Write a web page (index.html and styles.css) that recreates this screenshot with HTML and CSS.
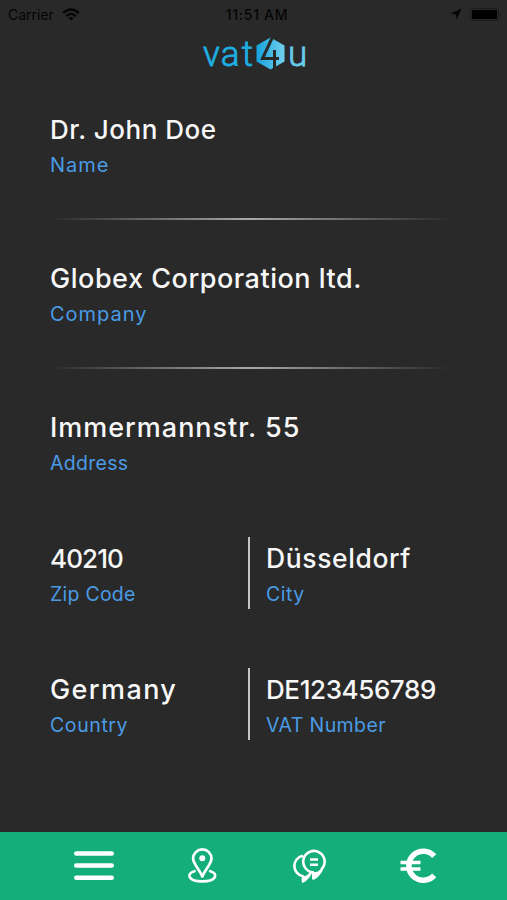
FILE: index.html
```html
<!DOCTYPE html>
<html lang="en">
<head>
<meta charset="utf-8">
<title>vat4u</title>
<link rel="stylesheet" href="styles.css">
</head>
<body>
<div class="app">
  <header class="status">
    <div class="status-left"><span>Carrier</span>
      <svg width="18" height="13" viewBox="0 0 18 13" fill="none" stroke="#050505" stroke-width="2.3"><path d="M1.2 5.2Q9-2.2 16.8 5.2M4.1 8.1Q9 3.6 13.9 8.1"/><path d="M6.5 10Q9 7.8 11.5 10L9 12.5Z" fill="#050505" stroke="none"/></svg>
    </div>
    <span class="clock">11:51 AM</span>
    <div class="status-right">
      <svg width="12" height="12" viewBox="0 0 12 12"><path d="M11.5.5 6.8 11.5 6 6.4.5 5.5Z" fill="#050505"/></svg>
      <svg width="32" height="13" viewBox="0 0 32 13"><rect x=".5" y=".5" width="28" height="12" rx="2.5" fill="none" stroke="#1c1c1c"/><rect x="2" y="2" width="25" height="9" rx="1" fill="#000"/><path d="M30 4q2 2.5 0 5z" fill="#1c1c1c"/></svg>
    </div>
  </header>
  <div class="brand">
    <svg width="120" height="56" viewBox="0 -10 120 56">
      <defs><linearGradient id="hex"><stop offset="0" stop-color="#14a3dc"/><stop offset="1" stop-color="#72d0ee"/></linearGradient></defs>
      <text class="logo-text" x="1 18.7 39.7" y="29.7">vat</text>
      <path d="M68.5 1.5 82.5 9.5V25.5L68.5 33.5 54.5 25.5V9.5Z" fill="url(#hex)"/>
      <path d="M71 0 60.5 22.5H77M72.5 14V34" fill="none" stroke="#292929" stroke-width="3"/>
      <text class="logo-text logo-end" x="86" y="29.7">u</text>
    </svg>
  </div>
  <main class="profile">
    <section class="field ruled"><div class="value name">Dr. John Doe</div><div class="label l-name">Name</div></section>
    <section class="field ruled"><div class="value company">Globex Corporation ltd.</div><div class="label l-company">Company</div></section>
    <section class="field street"><div class="value address">Immermannstr. 55</div><div class="label l-address">Address</div></section>
    <div class="pair">
      <section class="field main"><div class="value zip">40210</div><div class="label l-zip">Zip Code</div></section>
      <section class="field side"><div class="value city">Düsseldorf</div><div class="label l-city">City</div></section>
    </div>
    <div class="pair">
      <section class="field main"><div class="value country">Germany</div><div class="label l-country">Country</div></section>
      <section class="field side"><div class="value vat">DE123456789</div><div class="label l-vat">VAT Number</div></section>
    </div>
  </main>
  <nav class="tabs">
    <svg width="42" height="38" viewBox="0 0 42 38" stroke="#fff" stroke-width="4.6" stroke-linecap="round"><path d="M3.3 6.5H38.7M3.3 18.5H38.7M3.3 30.7H38.7"/></svg>
    <svg width="32" height="38" viewBox=".7 0 32 38" fill="none" stroke="#fff" stroke-width="2.7" stroke-linecap="round" stroke-linejoin="round"><path d="M16 29.5C13.5 23 6.8 17 6.8 11.6A9.2 9.2 0 0 1 25.2 11.6C25.2 17 18.5 23 16 29.5Z"/><circle cx="16" cy="11.3" r="3" fill="#fff" stroke="none"/><path d="M8.2 24.2C-.5 26.4 1.5 34.4 16 34.4S32.5 26.4 23.8 24.2"/></svg>
    <svg width="36" height="38" viewBox="-1.5 0 36 38" fill="none" stroke="#fff" stroke-width="2.6" stroke-linejoin="round"><path d="M10.5 8.7A10.4 10.4 0 0 0 10.5 29.2V34.5Q16 31 18.5 25"/><path d="M11.3 29.2V33.5L16.5 28" fill="#fff"/><path d="M20.5 25.3A10.7 10.7 0 1 1 29.5 21.7Q27 28 21 31.5Z"/><path d="M21 25.5V31L28 24" fill="#fff"/><path d="M17.5 12.5H25.5M17.5 17.7H25.5" stroke-width="2.4"/></svg>
    <svg width="38" height="38" viewBox="0 0 38 38" fill="none" stroke="#fff"><path d="M35.2 9.1A14.5 14.5 0 1 0 35.2 28.3" stroke-width="5.6"/><path d="M1.5 15.4H21.5M1.5 22H21.5" stroke-width="3.5"/></svg>
  </nav>
</div>
</body>
</html>
```

FILE: styles.css
```css
* { box-sizing: border-box; }
body { margin: 0; background: #292929; font-family: Inter, "Liberation Sans", sans-serif; }
.app { width: 507px; height: 900px; display: flex; flex-direction: column; overflow: hidden; }
.status { height: 28px; padding: 0 5px 0 8px; display: grid; grid-template-columns: 1fr auto 1fr; align-items: center; color: #050505; font-size: 14px; }
.status-left, .status-right { display: flex; align-items: center; gap: 8px; }
.status-right { justify-content: flex-end; }
.clock { font-weight: 500; font-size: 14px; letter-spacing: .7px; padding-left: 4px; }
.brand { height: 81px; padding-left: 202px; }
.brand svg { display: block; margin-top: -2px; }
.logo-text { font-family: Roboto, sans-serif; font-size: 35px; font-weight: 300; fill: #1eaee0; stroke: #1eaee0; stroke-width: .8px; }
.logo-end { fill: #68cbea; stroke: #68cbea; }
.profile { flex: 1; padding-left: 50px; }
.field { height: 71px; white-space: nowrap; }
.value { font-size: 26px; line-height: 41px; font-weight: 500; color: #f7f7f7; }
.label { font-size: 19.5px; line-height: 30px; color: #4a9be4; }
.name { letter-spacing: .52px; }
.company { font-size: 27px; letter-spacing: .53px; }
.address { font-size: 27px; letter-spacing: .98px; }
.zip { letter-spacing: -.9px; }
.city { font-size: 26.5px; letter-spacing: .6px; }
.country { font-size: 27px; letter-spacing: 1.4px; }
.vat { letter-spacing: -.4px; }
.l-name { font-size: 20px; letter-spacing: 1px; }
.l-company { font-size: 20px; letter-spacing: 1px; }
.l-address { letter-spacing: .3px; }
.l-zip { letter-spacing: .25px; }
.l-city { letter-spacing: .5px; }
.l-country { letter-spacing: .6px; }
.l-vat { letter-spacing: .4px; }
.ruled { height: 149px; }
.ruled::after { content: ""; display: block; width: 400px; height: 2px; margin-top: 38px; background: linear-gradient(90deg, transparent, #a8a8a8 50%, transparent); }
.street { height: 130px; }
.pair { height: 131px; display: grid; grid-template-columns: 198px 1fr; }
.main { padding-top: 1px; }
.side { border-left: 2px solid #c4c4c4; padding: 1px 0 0 16px; height: 72px; }
.tabs { height: 68px; background: #14ae7b; display: flex; align-items: center; padding: 0 70px 0 73px; justify-content: space-between; }
```
